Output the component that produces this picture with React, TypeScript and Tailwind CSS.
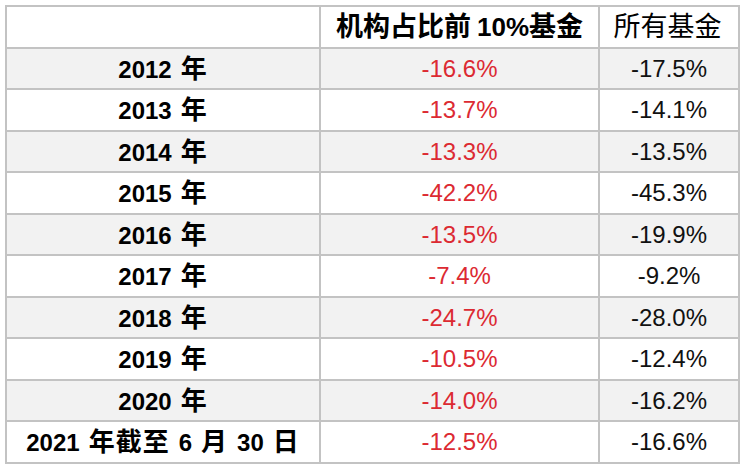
import React from 'react';

// ── Data ──────────────────────────────────────────────────────────────────────

const rows: { label: string; inst: string; all: string }[] = [
  { label: '2012 年', inst: '-16.6%', all: '-17.5%' },
  { label: '2013 年', inst: '-13.7%', all: '-14.1%' },
  { label: '2014 年', inst: '-13.3%', all: '-13.5%' },
  { label: '2015 年', inst: '-42.2%', all: '-45.3%' },
  { label: '2016 年', inst: '-13.5%', all: '-19.9%' },
  { label: '2017 年', inst: '-7.4%', all: '-9.2%' },
  { label: '2018 年', inst: '-24.7%', all: '-28.0%' },
  { label: '2019 年', inst: '-10.5%', all: '-12.4%' },
  { label: '2020 年', inst: '-14.0%', all: '-16.2%' },
  { label: '2021 年截至 6 月 30 日', inst: '-12.5%', all: '-16.6%' },
];

// ── Helpers ───────────────────────────────────────────────────────────────────

const isCjk = (s: string) => /[\u4e00-\u9fff]/.test(s);

// Latin and CJK runs get their own sizes, as in the source sheet;
// word spaces become a fixed gap so flex doesn't trim them
function Mixed({ text, header }: { text: string; header?: boolean }) {
  const words = text.split(' ');
  return (
    <span className={`inline-flex items-baseline ${header ? 'gap-[6px]' : 'gap-[9px]'}`}>
      {words.map((w, wi) => (
        <span key={wi} className="whitespace-nowrap">
          {(w.match(/[\u4e00-\u9fff]+|[^\u4e00-\u9fff]+/g) ?? []).map((p, i) =>
            isCjk(p) ? (
              <span key={i} className={header ? 'text-[27px]' : 'text-[26px] tracking-[1px]'}>
                {p}
              </span>
            ) : (
              <span key={i} className={header ? 'text-[26px]' : 'text-[24px]'}>
                {p}
              </span>
            ),
          )}
        </span>
      ))}
    </span>
  );
}

function Cell({ children, shaded, className = '' }: { children?: React.ReactNode; shaded?: boolean; className?: string }) {
  return (
    <div
      className={`flex items-center justify-center whitespace-nowrap leading-none ${shaded ? 'bg-[#f2f2f2]' : 'bg-white'} ${className}`}
    >
      {children}
    </div>
  );
}

// ── Page ──────────────────────────────────────────────────────────────────────

export default function App() {
  return (
    <div className="w-[746px] h-[467px] bg-white p-[5px] font-['Liberation_Sans','Noto_Sans_CJK_SC',sans-serif] text-black">
      <div className="grid grid-cols-[312px_277px_138px] grid-rows-[repeat(11,39.5px)] gap-[2px] p-[2px] bg-[#c3c3c3] w-[735px]">
        {/* header */}
        <Cell />
        <Cell className="font-bold pt-[1px]">
          <Mixed text="机构占比前 10%基金" header />
        </Cell>
        <Cell className="text-[27px] pr-[3px] pt-[1px]">所有基金</Cell>

        {rows.map((r, i) => {
          const shaded = i % 2 === 0;
          return (
            <React.Fragment key={r.label}>
              <Cell shaded={shaded} className="font-bold pt-[1px]">
                <Mixed text={r.label} />
              </Cell>
              <Cell shaded={shaded} className="text-[24px] text-[#dc2a32] pt-[1px]">
                {r.inst}
              </Cell>
              <Cell shaded={shaded} className="text-[24px] text-[#111] pt-[1px]">
                {r.all}
              </Cell>
            </React.Fragment>
          );
        })}
      </div>
    </div>
  );
}
